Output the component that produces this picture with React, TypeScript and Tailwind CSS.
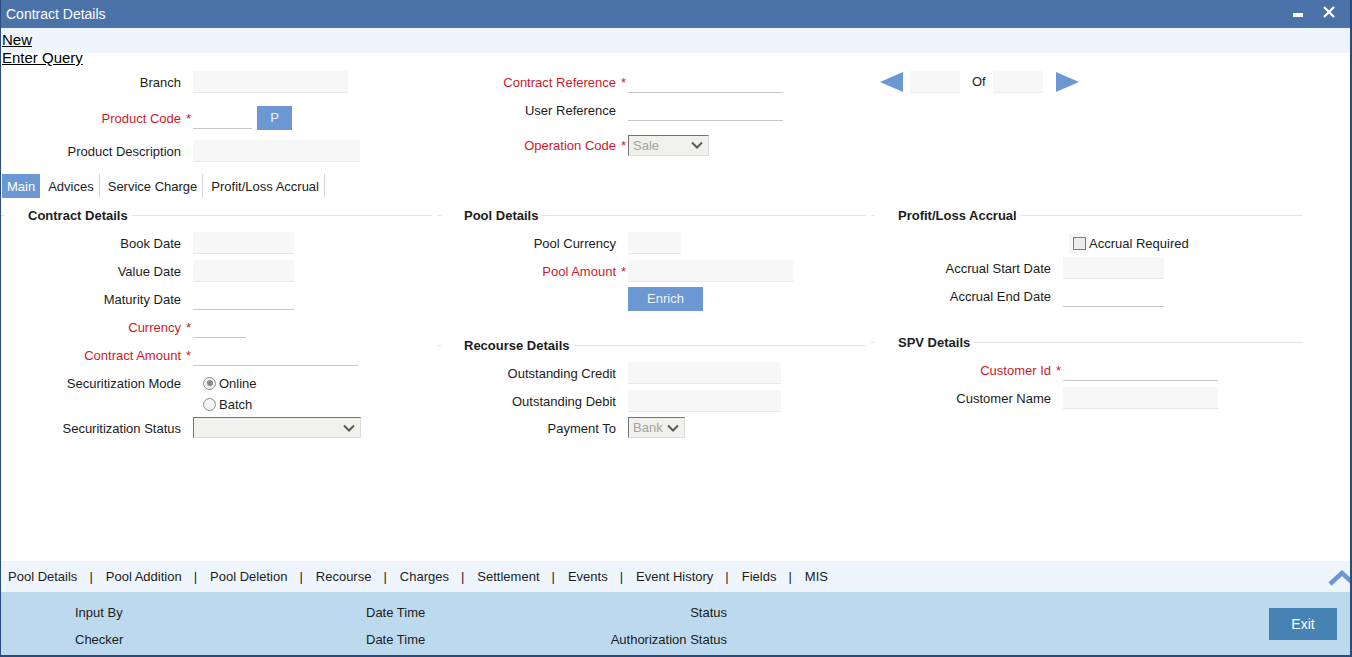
import type { ReactNode } from "react";

// Contract Details screen (securitization contract input form).

const RED = "text-[#cc1a2c]";

function Field({ w, edit }: { w: string; edit?: boolean }) {
	return (
		<div
			className={`h-[22px] ${w} ${
				edit
					? "border-b border-[#c8c8c8] bg-white"
					: "border-b border-[#e8e8e8] bg-[#f7f7f7]"
			}`}
		/>
	);
}

function Chevron() {
	return (
		<svg width="12" height="8" viewBox="0 0 12 8" className="shrink-0">
			<path d="M1 1.5l5 5 5-5" stroke="#5a5a5a" strokeWidth="2" fill="none" />
		</svg>
	);
}

function Select({ w, value }: { w: string; value?: string }) {
	return (
		<div
			className={`flex h-[21px] ${w} items-center justify-between border border-t-[#727272] border-l-[#727272] border-b-[#dcdcdc] border-r-[#dcdcdc] bg-[#f0f0ec] pl-[4px] pr-[5px] text-[#a3a3a3]`}
		>
			<span className="pt-[1px]">{value ?? ""}</span>
			<Chevron />
		</div>
	);
}

function Row({
	label,
	req,
	lw,
	className = "",
	children,
}: {
	label?: string;
	req?: boolean;
	lw: string;
	className?: string;
	children?: ReactNode;
}) {
	return (
		<div className={`flex items-center ${className}`}>
			<div className={`${lw} shrink-0 pt-[2px] text-right ${req ? RED : "text-[#1c1c1c]"}`}>
				{label}
			</div>
			<div className={`w-[12px] shrink-0 pl-[5px] pt-[2px] ${RED}`}>{req ? "*" : ""}</div>
			{children}
		</div>
	);
}

function Legend({ title, className = "" }: { title: string; className?: string }) {
	return (
		<div className={`flex h-[16px] items-center ${className}`}>
			<div className="h-px w-[4px] bg-[#e4e4e4]" />
			<div className="w-[23px]" />
			<span className="pt-[1px] font-bold text-[#1c1c1c]">{title}</span>
			<div className="w-[4px]" />
			<div className="h-px flex-1 bg-[#e4e4e4]" />
		</div>
	);
}

function Radio({ on, label }: { on?: boolean; label: string }) {
	return (
		<div className="flex items-center">
			<div className="ml-[10px] flex h-[13px] w-[13px] items-center justify-center rounded-full border border-[#8c8c8c] bg-[#f4f4f4]">
				{on ? <div className="h-[6px] w-[6px] rounded-full bg-[#8a8a8a]" /> : null}
			</div>
			<span className="ml-[3px] pt-[2px] text-[#1c1c1c]">{label}</span>
		</div>
	);
}

function BlueButton({ label, w, className = "" }: { label: string; w: string; className?: string }) {
	return (
		<div
			className={`flex h-[24px] ${w} items-center justify-center bg-[#6b98d3] text-[#eef3fb] ${className}`}
		>
			{label}
		</div>
	);
}

const navItems = [
	"Pool Details",
	"Pool Addition",
	"Pool Deletion",
	"Recourse",
	"Charges",
	"Settlement",
	"Events",
	"Event History",
	"Fields",
	"MIS",
];

export default function App() {
	return (
		<div className="flex h-[657px] w-[1352px] flex-col overflow-hidden border-b-2 border-l border-r-2 border-[#2b4a7e] bg-white font-['Liberation_Sans',Arial,sans-serif] text-[13px] leading-[16px]">
			{/* title bar */}
			<div className="flex h-[28px] shrink-0 items-center bg-[#4b72a9] pl-[5px] text-[14px] text-white">
				<span>Contract Details</span>
				<div className="ml-auto mr-[15px] flex items-center">
					<div className="mt-[1px] h-[4px] w-[10px] bg-white" />
					<svg width="12" height="12" viewBox="0 0 12 12" className="ml-[20px] -mt-[5px]">
						<path d="M1 1l10 10M11 1L1 11" stroke="white" strokeWidth="2.2" />
					</svg>
				</div>
			</div>

			{/* toolbar links */}
			<div className="flex h-[39px] shrink-0 flex-col bg-[linear-gradient(#eef5fd_25px,white_25px)] pl-[1px] pt-[3px] text-[15px] leading-[18px] text-black">
				<span className="underline">New</span>
				<span className="underline">Enter Query</span>
			</div>

			<div className="flex flex-1 flex-col">
				{/* header fields */}
				<div className="flex">
					<div className="flex w-[436px] flex-col">
						<Row label="Branch" lw="w-[180px]" className="mt-[4px] h-[22px]">
							<Field w="w-[155px]" />
						</Row>
						<Row label="Product Code" req lw="w-[180px]" className="mt-[13px] h-[24px]">
							<Field w="w-[59px]" edit />
							<BlueButton label="P" w="w-[35px]" className="ml-[5px]" />
						</Row>
						<Row label="Product Description" lw="w-[180px]" className="mt-[9px] h-[23px]">
							<Field w="w-[167px]" />
						</Row>
					</div>
					<div className="flex w-[434px] flex-col">
						<Row label="Contract Reference" req lw="w-[179px]" className="mt-[4px] h-[22px]">
							<Field w="w-[155px]" edit />
						</Row>
						<Row label="User Reference" lw="w-[179px]" className="mt-[6px] h-[22px]">
							<Field w="w-[155px]" edit />
						</Row>
						<Row label="Operation Code" req lw="w-[179px]" className="mt-[13px] h-[22px]">
							<Select w="w-[81px]" value="Sale" />
						</Row>
					</div>
					<div className="flex flex-1 flex-col">
						<div className="ml-[9px] mt-[4px] flex h-[22px] items-center">
							<svg width="23" height="20" viewBox="0 0 23 20">
								<path d="M0 10L23 0V20Z" fill="#6b98d3" />
							</svg>
							<div className="ml-[7px] h-[22px] w-[50px] border-b border-[#ececec] bg-[#f7f7f7]" />
							<span className="ml-[12px] text-[#1c1c1c]">Of</span>
							<div className="ml-[7px] h-[22px] w-[50px] border-b border-[#ececec] bg-[#f7f7f7]" />
							<svg width="23" height="20" viewBox="0 0 23 20" className="ml-[13px]">
								<path d="M23 10L0 0V20Z" fill="#6b98d3" />
							</svg>
						</div>
					</div>
				</div>

				{/* tabs */}
				<div className="mt-[12px] flex h-[24px] items-stretch">
					<div className="ml-[1px] flex items-center bg-[#6b98d3] px-[5px] pt-[1px] text-white">Main</div>
					{["Advices", "Service Charge", "Profit/Loss Accrual"].map((t) => (
						<div
							key={t}
							className="flex items-center border-r border-[#d4d4d4] pl-[8px] pr-[5px] pt-[1px] text-[#1c1c1c]"
						>
							{t}
						</div>
					))}
				</div>

				{/* sections */}
				<div className="flex">
					<div className="flex w-[436px] flex-col pr-[5px]">
						<Legend title="Contract Details" className="mt-[9px]" />
						<Row label="Book Date" lw="w-[180px]" className="mt-[9px] h-[22px]">
							<Field w="w-[101px]" />
						</Row>
						<Row label="Value Date" lw="w-[180px]" className="mt-[6px] h-[22px]">
							<Field w="w-[101px]" />
						</Row>
						<Row label="Maturity Date" lw="w-[180px]" className="mt-[6px] h-[22px]">
							<Field w="w-[101px]" edit />
						</Row>
						<Row label="Currency" req lw="w-[180px]" className="mt-[6px] h-[22px]">
							<Field w="w-[53px]" edit />
						</Row>
						<Row label="Contract Amount" req lw="w-[180px]" className="mt-[6px] h-[22px]">
							<Field w="w-[165px]" edit />
						</Row>
						<Row label="Securitization Mode" lw="w-[180px]" className="mt-[6px] h-[22px]">
							<Radio on label="Online" />
						</Row>
						<Row lw="w-[180px]" className="h-[20px]">
							<Radio label="Batch" />
						</Row>
						<Row label="Securitization Status" lw="w-[180px]" className="mt-[3px] h-[21px]">
							<Select w="w-[168px]" />
						</Row>
					</div>

					<div className="flex w-[434px] flex-col pr-[5px]">
						<Legend title="Pool Details" className="mt-[9px]" />
						<Row label="Pool Currency" lw="w-[179px]" className="mt-[9px] h-[22px]">
							<Field w="w-[53px]" />
						</Row>
						<Row label="Pool Amount" req lw="w-[179px]" className="mt-[6px] h-[22px]">
							<Field w="w-[165px]" />
						</Row>
						<Row lw="w-[179px]" className="mt-[5px] h-[24px]">
							<BlueButton label="Enrich" w="w-[75px]" />
						</Row>
						<Legend title="Recourse Details" className="mt-[26px]" />
						<Row label="Outstanding Credit" lw="w-[179px]" className="mt-[9px] h-[22px]">
							<Field w="w-[153px]" />
						</Row>
						<Row label="Outstanding Debit" lw="w-[179px]" className="mt-[6px] h-[22px]">
							<Field w="w-[153px]" />
						</Row>
						<Row label="Payment To" lw="w-[179px]" className="mt-[5px] h-[21px]">
							<Select w="w-[57px]" value="Bank" />
						</Row>
					</div>

					<div className="flex flex-1 flex-col pr-[47px]">
						<Legend title="Profit/Loss Accrual" className="mt-[9px]" />
						<Row lw="w-[180px]" className="mt-[9px] h-[22px]">
							<div className="ml-[6px] flex h-[20px] w-[20px] items-center justify-center bg-[#f6f6f6]">
								<div className="h-[13px] w-[13px] border border-[#7a7a7a] bg-[#ececec]" />
							</div>
							<span className="pt-[2px] text-[#1c1c1c]">Accrual Required</span>
						</Row>
						<Row label="Accrual Start Date" lw="w-[180px]" className="mt-[2px] h-[23px]">
							<Field w="w-[101px]" />
						</Row>
						<Row label="Accrual End Date" lw="w-[180px]" className="mt-[6px] h-[22px]">
							<Field w="w-[101px]" edit />
						</Row>
						<Legend title="SPV Details" className="mt-[27px]" />
						<Row label="Customer Id" req lw="w-[180px]" className="mt-[9px] h-[22px]">
							<Field w="w-[155px]" edit />
						</Row>
						<Row label="Customer Name" lw="w-[180px]" className="mt-[6px] h-[22px]">
							<Field w="w-[155px]" />
						</Row>
					</div>
				</div>
			</div>

			{/* sub-screen links */}
			<div className="flex h-[31px] shrink-0 items-center bg-[#eef5fd] pl-[7px] pt-[1px] text-[#1c1c1c]">
				{navItems.map((n, i) => (
					<span key={n} className="flex items-center">
						{i > 0 ? <span className="ml-[12px] mr-[13px]">|</span> : null}
						{n}
					</span>
				))}
				<svg width="22" height="16" viewBox="0 0 22 16" className="ml-auto mb-[6px] self-end">
					<path d="M2 14L14 3L26 14" stroke="#6b98d3" strokeWidth="4.5" fill="none" />
				</svg>
			</div>

			{/* audit footer */}
			<div className="flex h-[63px] shrink-0 items-center bg-[#bdd9ee] text-[#1c1c1c]">
				<div className="flex w-[365px] flex-col gap-[11px] pl-[74px] pt-[6px]">
					<span>Input By</span>
					<span>Checker</span>
				</div>
				<div className="flex w-[200px] flex-col gap-[11px] pt-[6px]">
					<span>Date Time</span>
					<span>Date Time</span>
				</div>
				<div className="flex w-[161px] flex-col gap-[11px] pt-[6px] text-right">
					<span>Status</span>
					<span>Authorization Status</span>
				</div>
				<div className="ml-auto mr-[13px] flex h-[32px] w-[68px] items-center justify-center bg-[#4682b4] text-[14px] text-white">
					Exit
				</div>
			</div>
		</div>
	);
}
